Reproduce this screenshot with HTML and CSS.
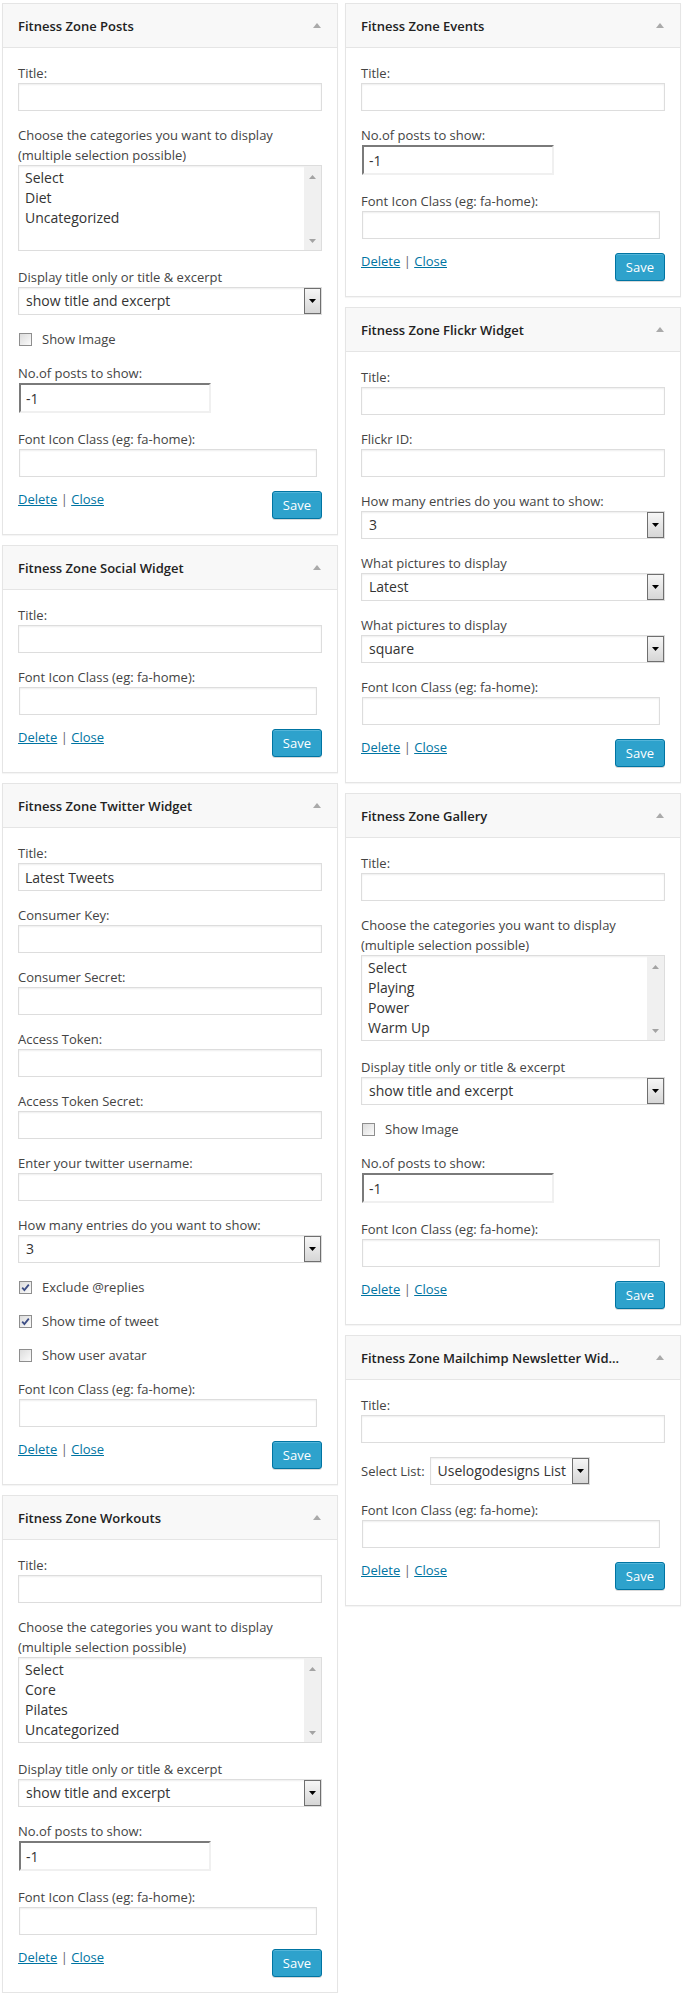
FILE: index.html
```html
<!DOCTYPE html>
<html lang="en">
<head>
<meta charset="utf-8">
<title>Widgets</title>
<link rel="stylesheet" href="styles.css">
</head>
<body>
<div class="page">
  <div class="col">

    <!-- Posts -->
    <div class="widget">
      <div class="widget-top">
        <h3 class="widget-title">Fitness Zone Posts</h3>
        <svg class="toggle" width="8" height="5" viewBox="0 0 8 5"><path d="M0 5H8L4 0Z"/></svg>
      </div>
      <div class="widget-inside">
        <div class="field"><label class="lbl">Title:</label><input class="text" type="text" value=""></div>
        <div class="field"><label class="lbl">Choose the categories you want to display<br>(multiple selection possible)</label>
          <div class="listbox">
            <div class="opts"><div>Select</div><div>Diet</div><div>Uncategorized</div></div>
            <div class="sb"><svg width="7" height="4" viewBox="0 0 7 4"><path d="M0 4H7L3.5 0Z"/></svg><svg width="7" height="4" viewBox="0 0 7 4"><path d="M0 0H7L3.5 4Z"/></svg></div>
          </div>
        </div>
        <div class="field"><label class="lbl">Display title only or title &amp; excerpt</label>
          <div class="select"><span class="select-val">show title and excerpt</span><span class="select-btn"><svg width="7" height="4" viewBox="0 0 7 4"><path d="M0 0H7L3.5 4Z"/></svg></span></div>
        </div>
        <div class="check"><span class="cb"></span><span>Show Image</span></div>
        <div class="field"><label class="lbl">No.of posts to show:</label><input class="num" type="text" value="-1"></div>
        <div class="field"><label class="lbl">Font Icon Class (eg: fa-home):</label><input class="icon" type="text" value=""></div>
        <div class="actions"><div class="links"><a href="#">Delete</a> <span class="sep">|</span> <a href="#">Close</a></div><button class="btn-save" type="button">Save</button></div>
      </div>
    </div>

    <!-- Social -->
    <div class="widget">
      <div class="widget-top">
        <h3 class="widget-title">Fitness Zone Social Widget</h3>
        <svg class="toggle" width="8" height="5" viewBox="0 0 8 5"><path d="M0 5H8L4 0Z"/></svg>
      </div>
      <div class="widget-inside">
        <div class="field"><label class="lbl">Title:</label><input class="text" type="text" value=""></div>
        <div class="field"><label class="lbl">Font Icon Class (eg: fa-home):</label><input class="icon" type="text" value=""></div>
        <div class="actions"><div class="links"><a href="#">Delete</a> <span class="sep">|</span> <a href="#">Close</a></div><button class="btn-save" type="button">Save</button></div>
      </div>
    </div>

    <!-- Twitter -->
    <div class="widget">
      <div class="widget-top">
        <h3 class="widget-title">Fitness Zone Twitter Widget</h3>
        <svg class="toggle" width="8" height="5" viewBox="0 0 8 5"><path d="M0 5H8L4 0Z"/></svg>
      </div>
      <div class="widget-inside">
        <div class="field"><label class="lbl">Title:</label><input class="text" type="text" value="Latest Tweets"></div>
        <div class="field"><label class="lbl">Consumer Key:</label><input class="text" type="text" value=""></div>
        <div class="field"><label class="lbl">Consumer Secret:</label><input class="text" type="text" value=""></div>
        <div class="field"><label class="lbl">Access Token:</label><input class="text" type="text" value=""></div>
        <div class="field"><label class="lbl">Access Token Secret:</label><input class="text" type="text" value=""></div>
        <div class="field"><label class="lbl">Enter your twitter username:</label><input class="text" type="text" value=""></div>
        <div class="field"><label class="lbl">How many entries do you want to show:</label>
          <div class="select"><span class="select-val">3</span><span class="select-btn"><svg width="7" height="4" viewBox="0 0 7 4"><path d="M0 0H7L3.5 4Z"/></svg></span></div>
        </div>
        <div class="check"><span class="cb"><svg width="11" height="11" viewBox="0 0 11 11"><path d="M2.2 5.6L4.4 8L8.8 2.6" fill="none" stroke="#3c4d85" stroke-width="1.8"/></svg></span><span>Exclude @replies</span></div>
        <div class="check"><span class="cb"><svg width="11" height="11" viewBox="0 0 11 11"><path d="M2.2 5.6L4.4 8L8.8 2.6" fill="none" stroke="#3c4d85" stroke-width="1.8"/></svg></span><span>Show time of tweet</span></div>
        <div class="check"><span class="cb"></span><span>Show user avatar</span></div>
        <div class="field"><label class="lbl">Font Icon Class (eg: fa-home):</label><input class="icon" type="text" value=""></div>
        <div class="actions"><div class="links"><a href="#">Delete</a> <span class="sep">|</span> <a href="#">Close</a></div><button class="btn-save" type="button">Save</button></div>
      </div>
    </div>

    <!-- Workouts -->
    <div class="widget">
      <div class="widget-top">
        <h3 class="widget-title">Fitness Zone Workouts</h3>
        <svg class="toggle" width="8" height="5" viewBox="0 0 8 5"><path d="M0 5H8L4 0Z"/></svg>
      </div>
      <div class="widget-inside">
        <div class="field"><label class="lbl">Title:</label><input class="text" type="text" value=""></div>
        <div class="field"><label class="lbl">Choose the categories you want to display<br>(multiple selection possible)</label>
          <div class="listbox">
            <div class="opts"><div>Select</div><div>Core</div><div>Pilates</div><div>Uncategorized</div></div>
            <div class="sb"><svg width="7" height="4" viewBox="0 0 7 4"><path d="M0 4H7L3.5 0Z"/></svg><svg width="7" height="4" viewBox="0 0 7 4"><path d="M0 0H7L3.5 4Z"/></svg></div>
          </div>
        </div>
        <div class="field"><label class="lbl">Display title only or title &amp; excerpt</label>
          <div class="select"><span class="select-val">show title and excerpt</span><span class="select-btn"><svg width="7" height="4" viewBox="0 0 7 4"><path d="M0 0H7L3.5 4Z"/></svg></span></div>
        </div>
        <div class="field"><label class="lbl">No.of posts to show:</label><input class="num" type="text" value="-1"></div>
        <div class="field"><label class="lbl">Font Icon Class (eg: fa-home):</label><input class="icon" type="text" value=""></div>
        <div class="actions"><div class="links"><a href="#">Delete</a> <span class="sep">|</span> <a href="#">Close</a></div><button class="btn-save" type="button">Save</button></div>
      </div>
    </div>
  </div>

  <div class="col">

    <!-- Events -->
    <div class="widget">
      <div class="widget-top">
        <h3 class="widget-title">Fitness Zone Events</h3>
        <svg class="toggle" width="8" height="5" viewBox="0 0 8 5"><path d="M0 5H8L4 0Z"/></svg>
      </div>
      <div class="widget-inside">
        <div class="field"><label class="lbl">Title:</label><input class="text" type="text" value=""></div>
        <div class="field"><label class="lbl">No.of posts to show:</label><input class="num" type="text" value="-1"></div>
        <div class="field"><label class="lbl">Font Icon Class (eg: fa-home):</label><input class="icon" type="text" value=""></div>
        <div class="actions"><div class="links"><a href="#">Delete</a> <span class="sep">|</span> <a href="#">Close</a></div><button class="btn-save" type="button">Save</button></div>
      </div>
    </div>

    <!-- Flickr -->
    <div class="widget">
      <div class="widget-top">
        <h3 class="widget-title">Fitness Zone Flickr Widget</h3>
        <svg class="toggle" width="8" height="5" viewBox="0 0 8 5"><path d="M0 5H8L4 0Z"/></svg>
      </div>
      <div class="widget-inside">
        <div class="field"><label class="lbl">Title:</label><input class="text" type="text" value=""></div>
        <div class="field"><label class="lbl">Flickr ID:</label><input class="text" type="text" value=""></div>
        <div class="field"><label class="lbl">How many entries do you want to show:</label>
          <div class="select"><span class="select-val">3</span><span class="select-btn"><svg width="7" height="4" viewBox="0 0 7 4"><path d="M0 0H7L3.5 4Z"/></svg></span></div>
        </div>
        <div class="field"><label class="lbl">What pictures to display</label>
          <div class="select"><span class="select-val">Latest</span><span class="select-btn"><svg width="7" height="4" viewBox="0 0 7 4"><path d="M0 0H7L3.5 4Z"/></svg></span></div>
        </div>
        <div class="field"><label class="lbl">What pictures to display</label>
          <div class="select"><span class="select-val">square</span><span class="select-btn"><svg width="7" height="4" viewBox="0 0 7 4"><path d="M0 0H7L3.5 4Z"/></svg></span></div>
        </div>
        <div class="field"><label class="lbl">Font Icon Class (eg: fa-home):</label><input class="icon" type="text" value=""></div>
        <div class="actions"><div class="links"><a href="#">Delete</a> <span class="sep">|</span> <a href="#">Close</a></div><button class="btn-save" type="button">Save</button></div>
      </div>
    </div>

    <!-- Gallery -->
    <div class="widget">
      <div class="widget-top">
        <h3 class="widget-title">Fitness Zone Gallery</h3>
        <svg class="toggle" width="8" height="5" viewBox="0 0 8 5"><path d="M0 5H8L4 0Z"/></svg>
      </div>
      <div class="widget-inside">
        <div class="field"><label class="lbl">Title:</label><input class="text" type="text" value=""></div>
        <div class="field"><label class="lbl">Choose the categories you want to display<br>(multiple selection possible)</label>
          <div class="listbox">
            <div class="opts"><div>Select</div><div>Playing</div><div>Power</div><div>Warm Up</div></div>
            <div class="sb"><svg width="7" height="4" viewBox="0 0 7 4"><path d="M0 4H7L3.5 0Z"/></svg><svg width="7" height="4" viewBox="0 0 7 4"><path d="M0 0H7L3.5 4Z"/></svg></div>
          </div>
        </div>
        <div class="field"><label class="lbl">Display title only or title &amp; excerpt</label>
          <div class="select"><span class="select-val">show title and excerpt</span><span class="select-btn"><svg width="7" height="4" viewBox="0 0 7 4"><path d="M0 0H7L3.5 4Z"/></svg></span></div>
        </div>
        <div class="check"><span class="cb"></span><span>Show Image</span></div>
        <div class="field"><label class="lbl">No.of posts to show:</label><input class="num" type="text" value="-1"></div>
        <div class="field"><label class="lbl">Font Icon Class (eg: fa-home):</label><input class="icon" type="text" value=""></div>
        <div class="actions"><div class="links"><a href="#">Delete</a> <span class="sep">|</span> <a href="#">Close</a></div><button class="btn-save" type="button">Save</button></div>
      </div>
    </div>

    <!-- Mailchimp -->
    <div class="widget">
      <div class="widget-top">
        <h3 class="widget-title">Fitness Zone Mailchimp Newsletter Wid...</h3>
        <svg class="toggle" width="8" height="5" viewBox="0 0 8 5"><path d="M0 5H8L4 0Z"/></svg>
      </div>
      <div class="widget-inside">
        <div class="field"><label class="lbl">Title:</label><input class="text" type="text" value=""></div>
        <div class="inline-field"><label class="lbl-inline">Select List:</label>
          <div class="select select-small"><span class="select-val">Uselogodesigns List</span><span class="select-btn"><svg width="7" height="4" viewBox="0 0 7 4"><path d="M0 0H7L3.5 4Z"/></svg></span></div>
        </div>
        <div class="field"><label class="lbl">Font Icon Class (eg: fa-home):</label><input class="icon" type="text" value=""></div>
        <div class="actions"><div class="links"><a href="#">Delete</a> <span class="sep">|</span> <a href="#">Close</a></div><button class="btn-save" type="button">Save</button></div>
      </div>
    </div>
  </div>
</div>
</body>
</html>
```

FILE: styles.css
```css
* { box-sizing: border-box; }

html, body {
  margin: 0;
  padding: 0;
  background: #fff;
}

body {
  font-family: "Open Sans", "Liberation Sans", sans-serif;
  font-size: 13px;
  color: #444;
}

.page {
  display: flex;
  align-items: flex-start;
  gap: 7px;
  padding: 3px 0 0 2px;
}

.col {
  width: 336px;
  display: flex;
  flex-direction: column;
  gap: 10px;
}

.widget {
  background: #fff;
  border: 1px solid #e5e5e5;
  box-shadow: 0 1px 1px rgba(0, 0, 0, 0.04);
}

.widget-top {
  height: 44px;
  background: #f8f8f8;
  border-bottom: 1px solid #e5e5e5;
  display: flex;
  align-items: center;
  justify-content: space-between;
  padding: 0 16px 0 15px;
}

.widget-title {
  margin: 0;
  font-size: 13px;
  font-weight: 600;
  color: #222;
  white-space: nowrap;
  line-height: 20px;
}

.toggle { fill: #aaa; display: block; }

.widget-inside {
  padding: 15px 15px 15px;
  display: flex;
  flex-direction: column;
}

.field, .check, .actions, .inline-field { margin-top: 14px; }
.widget-inside > :first-child { margin-top: 0; }

.lbl {
  display: block;
  line-height: 20px;
  color: #444;
}

.text, .icon, .num {
  display: block;
  font-family: "Open Sans", "Liberation Sans", sans-serif;
  font-size: 14px;
  color: #333;
  background: #fff;
  margin: 0;
  outline: none;
}

.text, .icon {
  height: 28px;
  border: 1px solid #ddd;
  box-shadow: inset 0 1px 2px rgba(0, 0, 0, 0.07);
  padding: 0 6px;
}

.text { width: 100%; }

.icon {
  width: 298px;
  margin-left: 1px;
}

.num {
  width: 192px;
  height: 30px;
  margin-left: 1px;
  margin-bottom: 2px;
  padding: 0 5px;
  border-style: solid;
  border-width: 2px;
  border-color: #7a7a7a #f0f0f0 #f0f0f0 #7a7a7a;
}

/* listbox */
.listbox {
  height: 86px;
  border: 1px solid #ddd;
  box-shadow: inset 0 1px 2px rgba(0, 0, 0, 0.07);
  display: flex;
  margin-bottom: 2px;
  background: #fff;
}

.opts {
  flex: 1;
  padding: 2px 6px;
  font-size: 14px;
  line-height: 20px;
  color: #333;
}

.sb {
  width: 17px;
  background: #f0f0f0;
  display: flex;
  flex-direction: column;
  justify-content: space-between;
  align-items: center;
  padding: 9px 0 7px;
}

.sb svg { fill: #a3a3a3; display: block; }

/* select */
.select {
  height: 28px;
  border: 1px solid #ddd;
  box-shadow: inset 0 1px 2px rgba(0, 0, 0, 0.07);
  background: #fff;
  display: flex;
  align-items: stretch;
  padding-left: 7px;
  font-size: 14px;
  color: #333;
}

.select-val {
  flex: 1;
  line-height: 26px;
  white-space: nowrap;
}

.select-btn {
  width: 17px;
  border: 1px solid #6f6f6f;
  background: linear-gradient(#f6f6f6, #d6d6d6);
  display: flex;
  align-items: center;
  justify-content: center;
}

.select-btn svg { fill: #000; display: block; }

.inline-field {
  display: flex;
  align-items: center;
  gap: 5px;
  padding-bottom: 1px;
}

.lbl-inline { line-height: 20px; }

.select-small { width: 160px; }

/* checkbox */
.check {
  display: flex;
  align-items: center;
  height: 20px;
  padding-left: 1px;
  gap: 10px;
}

.cb {
  width: 13px;
  height: 13px;
  border: 1px solid #8e8e8e;
  background: linear-gradient(135deg, #dcdcdc, #fbfbfb);
  display: flex;
  align-items: center;
  justify-content: center;
}

.cb svg { display: block; }

/* actions */
.actions {
  display: flex;
  justify-content: space-between;
  align-items: flex-start;
}

.links {
  line-height: 16px;
  color: #666;
}

.links a {
  color: #0074a2;
  text-decoration: underline;
}

.sep { color: #666; }

.btn-save {
  height: 28px;
  padding: 0 10px;
  font-family: "Open Sans", "Liberation Sans", sans-serif;
  font-size: 13px;
  line-height: 26px;
  color: #fff;
  background: #2ea2cc;
  border: 1px solid #0074a2;
  border-radius: 3px;
  box-shadow: inset 0 1px 0 rgba(120, 200, 230, 0.5), 0 1px 0 rgba(0, 0, 0, 0.15);
  cursor: pointer;
}
```
